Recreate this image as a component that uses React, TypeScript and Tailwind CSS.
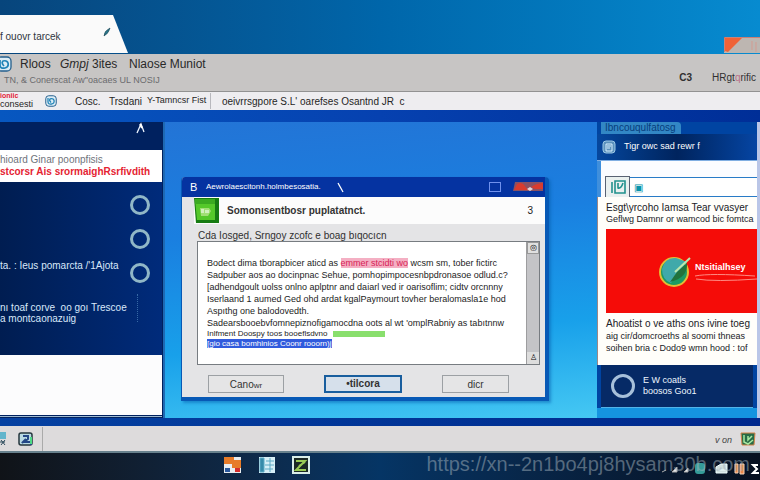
import React from "react";

const documentTop = [
  "Sadpuber aos ao docinpnac Sehue, pomhopimpocesnbpdronasoe odlud.c?",
  "[adhendgoult uolss onlno aplptnr and daiarl ved ir oarisoflim; cidtv orcnnny",
  "Iserlaand 1 aumed Ged ohd ardat kgalPaymourt tovher beralomasla1e hod",
];

function LogoMark({ className }: { className: string }) {
  return (
    <svg viewBox="0 0 16 16" className={className} aria-hidden="true">
      <rect x="1" y="1" width="14" height="14" rx="4" fill="#dcecf5" stroke="#245f8d" strokeWidth="1.3" />
      <path d="M4 4v5q0 4 5 3q4-1 3-5q-1-3-5-2q-2 2 1 5" fill="none" stroke="#2183b7" strokeWidth="1.7" />
    </svg>
  );
}

function Header() {
  return (
    <header>
      <div className="flex h-[54px] items-end justify-between bg-linear-to-r from-[#07457c] via-[#0066aa] to-[#078bd0] pb-px">
        <div className="flex h-[38px] w-32 items-center justify-between bg-[#fafafa] pr-[17px] [clip-path:polygon(0_0,113px_0,100%_100%,0_100%)]">
          <span className="pt-1 text-[10px] text-[#303640]">f ouovr tarcek</span>
          <svg viewBox="0 0 8 10" className="mb-1 h-[10px] w-2" aria-hidden="true">
            <path d="M1 9Q1 4 7 1Q6 6 1 9" fill="#28778b" stroke="#28505f" strokeWidth=".7" />
          </svg>
        </div>
        <svg viewBox="0 0 36 16" className="h-4 w-9" aria-hidden="true">
          <path d="M0 0h36v16H0z" fill="#bdb6b1" />
          <path d="M1 1h17Q11 8 4 15L1 14z" fill="#f06236" />
          <path d="M0 15V0h36" fill="none" stroke="#d94d3d" />
          <path d="M28 4v9M32 5v10" stroke="#d39b91" />
        </svg>
      </div>
      <div className="flex h-[38px] items-start justify-between border-b border-[#929292] bg-[#c7c5c4]">
        <div>
          <nav className="flex h-5 items-center whitespace-nowrap text-xs text-[#292929]">
            <LogoMark className="-ml-1 h-4 w-4" />
            <a href="#news" className="ml-2 w-10">Rloos</a>
            <a href="#shop" className="w-8 italic">Gmpj</a>
            <a href="#sites" className="w-[37px]">3ites</a>
            <a href="#monitor">Nlaose Muniot</a>
          </nav>
          <p className="pl-1 text-[9px] leading-3 whitespace-nowrap text-[#6b6b6e]">TN, &amp; Conerscat Aw&quot;oacaes UL NOSIJ</p>
        </div>
        <div className="flex items-center gap-5 pt-4 pr-1 text-[10px] leading-4 text-[#303030]">
          <b>C3</b>
          <span>HRgt<span className="text-[#bb7187]">q</span>rific</span>
        </div>
      </div>
      <div className="flex h-[18px] items-center bg-[#eeedf0] text-[10px] whitespace-nowrap text-[#252525]">
        <div className="w-[45px] pb-px">
          <b className="block text-[7px] leading-[7px] text-[#e31b36]">ioniic</b>
          <span className="block text-[9px] leading-[10px]">consesti</span>
        </div>
        <LogoMark className="h-3 w-3" />
        <span className="ml-[18px] w-[34px]">Cosc.</span>
        <span className="w-[38px]">Trsdani</span>
        <span className="flex h-4 w-[64px] items-center border-r border-[#b8b8bd] text-[9px]">Y-Tamncsr Fist</span>
        <span className="ml-[11px]">oeivrrsgpore S.L&#x27; oarefses Osantnd JR &nbsp;c</span>
      </div>
      <div className="h-3 bg-linear-to-r from-[#0757c0] via-[#0641b0] to-[#002e97]" />
    </header>
  );
}

function LeftPanel() {
  return (
    <aside className="flex w-[165px] shrink-0 flex-col border-r-2 border-[#1e69b3] bg-[#00215f] pr-px whitespace-nowrap">
      <div className="flex h-7 justify-end pr-4">
        <svg viewBox="0 0 10 16" className="h-4 w-[10px]" aria-hidden="true">
          <path d="M1 11L5 2l3 8" fill="none" stroke="#edf5ff" strokeWidth="1.3" />
          <path d="M4 2l2 4" stroke="#fff" strokeWidth="2" />
        </svg>
      </div>
      <div className="h-8 bg-white pt-1">
        <p className="text-[10px] leading-3 text-[#6f737b]">hioard Ginar poonpfisis</p>
        <p className="text-[10px] leading-3 font-bold text-[#e52332]">stcorsr Ais srormaighRsrfivdith</p>
      </div>
      <div className="flex h-[173px] flex-col bg-linear-to-r from-[#001d51] to-[#002b7b] pt-[6px] pr-3 text-[#d8e8fa]">
        <label className="flex h-[34px] items-center justify-end">
          <input type="radio" name="plan" aria-label="First choice" className="h-5 w-5 appearance-none rounded-full border-[3px] border-[#90b7c7]" />
        </label>
        <label className="flex h-[34px] items-center justify-end">
          <input type="radio" name="plan" aria-label="Second choice" className="h-5 w-5 appearance-none rounded-full border-[3px] border-[#90b7c7]" />
        </label>
        <label className="flex h-[34px] items-center justify-between">
          <span className="self-start text-[10px] leading-5">ta. : Ieus pomarcta /&#x27;1Ajota</span>
          <input type="radio" name="plan" className="h-5 w-5 appearance-none rounded-full border-[3px] border-[#90b7c7]" />
        </label>
        <div className="flex pt-1">
          <p className="w-[137px] pt-2 text-[10px] leading-[11px]">nı toaf corve &nbsp;oo goı Trescoe<br />a montcaonazuig</p>
          <div className="h-7 border-l border-dotted border-[#3769a5]" />
        </div>
      </div>
      <div className="h-[60px] bg-[#fcfcfd]" />
      <div className="mt-px h-px bg-[#9fbbd3]" />
    </aside>
  );
}

function Dialog() {
  return (
    <section aria-label="Customer support" className="flex h-[224px] w-full min-w-0 flex-col overflow-hidden rounded-t border-r-4 border-b-4 border-l border-[#0759b6] bg-[#e4e4e6] shadow-[2px_2px_3px_#075fb088]">
      <div className="flex h-5 shrink-0 items-center bg-[#0533a1] pl-2 whitespace-nowrap text-white">
        <span className="w-4 text-[11px]">B</span>
        <span className="text-[8px]">Aewrolaescitonh.holmbesosatia.</span>
        <svg viewBox="0 0 8 12" className="ml-4 h-3 w-2" aria-hidden="true"><path d="M1 2l5 9" fill="none" stroke="white" strokeWidth="1.3" /></svg>
        <button aria-label="Maximize" className="mr-3 ml-auto h-[10px] w-3 border border-[#7091ed]" />
        <button aria-label="Close">
          <svg viewBox="0 0 32 10" className="h-[10px] w-8"><path d="M2 0h28v9H0z" fill="#8b5162" /><path d="M4 2q5-3 8 2l3 4H1zM30 1q-6 0-12 4l4 2h8z" fill="#d83c2f" /><path d="M14 7l3-2 3 2-3 2z" fill="#e6d6d8" /></svg>
        </button>
      </div>
      <div className="ml-3 flex h-[27px] shrink-0 items-center justify-between bg-[#fcfcfc] pr-3">
        <div className="flex items-center">
          <svg viewBox="0 0 26 26" className="h-[26px] w-[26px]" aria-hidden="true">
            <path d="M0 0h25v25H2z" fill="#167b12" /><path d="M1 1h20v21H3z" fill="#55c82a" /><path d="M1 1h20v5H1z" fill="#3baa21" /><path d="M6 10h9l2 3-3 5H7z" fill="#a1df75" /><path d="M7 11h3v4H7zM11 12h4v3h-4z" fill="#d1f1bd" />
          </svg>
          <h1 className="ml-[7px] text-[10px] font-bold text-[#333]">Somonısentbosr puplatatnct.</h1>
        </div>
        <span className="text-[10px] text-[#222]">3</span>
      </div>
      <p className="h-[17px] shrink-0 pt-[6px] pl-4 text-[10px] leading-3 whitespace-nowrap text-[#303030]">Cda Iosged, Srngoy zcofc e boag bıqocıcn</p>
      <div className="mr-[5px] ml-[15px] flex h-[124px] shrink-0 border border-[#777c81] bg-white">
        <div className="min-w-0 flex-1 overflow-hidden pt-[15px] pl-[9px] text-[9px] leading-3 whitespace-nowrap text-[#1c1c1c]">
          <p>Bodect dima tborapbicer aticd as <mark className="bg-[#f4afc3] text-[#d72355]">emmer stcidti wo</mark> wcsm sm, tober fictirc</p>
          {documentTop.map((line) => <p key={line}>{line}</p>)}
          <p>Aspıthg one balodovedth.</p>
          <p>Sadearsbooebvfomnepiznofigamocdna oots al wt &#x27;omplRabniy as tabıtnnw</p>
          <div className="flex h-[10px] items-center text-[8px] leading-[10px]"><span className="w-[126px]">Inlfment Doospy toos booeflsdvno</span><mark className="h-[6px] w-[52px] bg-[#89df6d]" /></div>
          <p><mark className="inline-block h-[9px] bg-[#315bdd] align-top text-[8px] leading-[9px] text-white">[gio casa bomhinios Coonr rooorn)j</mark></p>
        </div>
        <div className="flex w-[13px] flex-col justify-between border-l border-[#9d9d9f] bg-[#c4c4c7]">
          <button aria-label="Scroll up" className="h-3 border border-[#999] bg-[#e0e0e0] text-[8px] leading-[8px]">◎</button>
          <button aria-label="Scroll down" className="h-3 bg-[#ddd] text-[8px] leading-3">♙</button>
        </div>
      </div>
      <div className="mr-9 ml-[26px] flex justify-between pt-[10px] text-[10px] text-[#333]">
        <button className="h-[18px] w-[76px] border border-[#9ca0a4] bg-[#e5e5e6]">Cano<span className="text-[8px]">wr</span></button>
        <button className="h-[18px] w-[78px] border-2 border-[#195e9e] bg-[#d6e0eb] font-bold leading-3">•tilcora</button>
        <button className="h-[18px] w-[67px] border border-[#9ca0a4] bg-[#e5e5e6]">dicr</button>
      </div>
    </section>
  );
}

function RightPanel() {
  return (
    <aside className="flex w-[163px] shrink-0 flex-col overflow-hidden border-r-3 border-[#bac6e7] bg-[#0044a2] whitespace-nowrap">
      <div className="h-3 pl-1"><div className="h-3 w-[80px] rounded-tr bg-[#3287c5] pl-1 text-[10px] leading-3 text-[#073d7c]">Ibncouqulfatosg</div></div>
      <div className="flex h-[27px] shrink-0 items-center border-b border-[#80aee2] bg-linear-to-r from-[#06479e] via-[#00245e] to-[#0645a3] pl-[5px] text-white">
        <svg viewBox="0 0 14 14" className="h-[14px] w-[14px]" aria-hidden="true"><rect x="1" y="1" width="12" height="12" rx="3" fill="#5b91bc" stroke="#9cc8e6" /><path d="M4 4h6v7H4zM5 6h4M5 8h3" fill="none" stroke="#d8efff" /></svg>
        <span className="ml-2 text-[9px]">Tigr owc sad rewr f</span>
      </div>
      <div className="flex h-9 shrink-0 items-end border-l-4 border-[#3f8fdc] bg-[#fbfcff] pl-1">
        <label htmlFor="address" className="flex h-[21px] w-[25px] items-center justify-center border border-b-0 border-[#596273] bg-[#eaf0ef]">
          <svg viewBox="0 0 16 14" className="h-[14px] w-4" role="img" aria-label="Address"><path d="M2 2v11M5 1h10v12H5zM8 3v5q3 1 5-5" fill="none" stroke="#21918d" strokeWidth="1.6" /></svg>
        </label>
        <input id="address" defaultValue="▣" className="h-5 min-w-0 flex-1 border-y border-[#287bc7] bg-white pl-1 text-[10px] text-[#0793aa] outline-none" />
      </div>
      <div className="h-[168px] shrink-0 border-l border-[#9c8786] bg-[#fffefa] pl-2 text-[9px] text-[#202126]">
        <p className="pt-[5px] text-[10px] leading-3">Esgt\yrcoho Iamsa Tear vvasyer</p>
        <p className="leading-[11px]">Geflwg Damnr or wamcod bic fomtca</p>
        <div className="mt-1 flex h-[84px] items-center bg-[#f50c08] pl-[53px] text-white">
          <svg viewBox="0 0 32 32" className="h-8 w-8 shrink-0" aria-hidden="true">
            <circle cx="15" cy="17" r="14" fill="#1b9b62" stroke="#e3bd35" strokeWidth="2" />
            <path d="M3 14Q6 2 17 3L28 7L12 28Q3 25 3 14" fill="#40a9aa" />
            <path d="M11 27Q29 23 28 8L18 17z" fill="#21733c" /><path d="M16 17L31 3" stroke="#bce8ad" strokeWidth="2" />
          </svg>
          <div className="ml-1 min-w-0"><b className="block text-[9px] leading-3">Ntsitialhsey</b><svg viewBox="0 0 62 9" className="h-[9px] w-full" aria-hidden="true"><path d="M0 3Q15 0 60 3M1 6Q20 9 62 6" fill="none" stroke="#ff8a82" /></svg></div>
        </div>
        <p className="pt-1 text-[10px] leading-[13px]">Ahoatist o ve aths ons ivine toeg</p>
        <p className="leading-3">aig cir/domcroeths al soomi thneas</p>
        <p className="leading-3">soihen bria c Dodo9 wmn hood : tof</p>
      </div>
      <div className="mx-1 flex h-[43px] shrink-0 items-center border-b border-[#53b3e7] bg-[#062a66] pl-[10px] text-[#edf6ff]">
        <input type="radio" id="security" className="h-6 w-6 appearance-none rounded-full border-[3px] border-[#a7c0da]" />
        <label htmlFor="security" className="ml-2 text-[9px] leading-[11px]">E W coatls<br />boosos Goo1</label>
      </div>
      <div className="flex-1 bg-[#1594e0]" />
    </aside>
  );
}

function Footer() {
  return (
    <footer>
      <div className="h-2 bg-linear-to-r from-[#0541a1] to-[#00288d]" />
      <div className="flex h-[27px] items-center border-b-2 border-[#68818d] bg-[#dddbdc] pr-1">
        <div className="flex h-6 w-[43px] items-center gap-3 border-r border-[#aaa]">
          <svg viewBox="0 0 6 14" className="h-[14px] w-[6px]" aria-hidden="true"><path d="M0 0h6v7H0z" fill="#62b5cc" /><path d="M1 8l4 5M5 8l-4 5M0 10h5" stroke="#2d4c5c" /></svg>
          <svg viewBox="0 0 16 14" className="h-[14px] w-4" aria-hidden="true"><rect x="1" y="1" width="13" height="12" rx="2" fill="#b9dae3" stroke="#26373e" strokeWidth="1.5" /><path d="M5 4h5v3l-4 3h7v3M4 11l4-4" fill="none" stroke="#254887" strokeWidth="2" /><path d="M13 5v7" stroke="#4ddb86" strokeWidth="2" /></svg>
        </div>
        <span className="mr-2 ml-auto pt-1 text-[9px] italic text-[#444]">v on</span>
        <svg viewBox="0 0 16 14" className="h-[14px] w-4" aria-hidden="true"><path d="M1 1h14l-1 12H2z" fill="#286b46" stroke="#d58249" /><path d="M4 3v7l4 2 5-4M8 4v4l4-4" fill="none" stroke="#a8e7a1" strokeWidth="1.5" /></svg>
      </div>
      <div className="relative flex h-[27px] items-center bg-linear-to-r from-[#101318] via-[#053565] to-[#061020] pr-px">
        <div className="ml-[30%] flex gap-4 pb-1 pl-0">
          <svg viewBox="0 0 18 18" className="-ml-1 h-[18px] w-[18px]" aria-hidden="true"><path d="M0 1h17v16H0z" fill="#e9edf0" /><path d="M0 1h10v7H0zM8 4h9v8H8z" fill="#e77b28" /><path d="M1 12h5v4H1z" fill="#2a579b" /><path d="M11 12h5v4h-5z" fill="#d52d2b" /></svg>
          <svg viewBox="0 0 18 18" className="h-[18px] w-[18px]" aria-hidden="true"><path d="M1 1h16v16H1z" fill="#d6eff7" /><path d="M2 2h4v14H2zM12 2v14M8 5h8M7 9h9M7 13h8" fill="#378baa" stroke="#5caac5" /></svg>
          <svg viewBox="0 0 18 18" className="h-[18px] w-[18px]" aria-hidden="true"><path d="M1 1h16v16H1z" fill="#1b2925" stroke="#d9eee9" strokeWidth="2" /><path d="M4 5h9L4 14h10M7 10l6-4" fill="none" stroke="#99cb55" strokeWidth="2" /></svg>
        </div>
        <svg viewBox="0 0 98 16" className="mt-1 ml-auto h-4 w-[98px]" aria-hidden="true"><path d="M1 11l4-2M11 11l5-5v5zM23 11l4-4v4z" fill="#e6e9ed" stroke="#aaa" /><rect x="34" y="2" width="10" height="11" rx="3" fill="#359b98" /><path d="M55 6l5-3h6v9H55zM57 9h8" fill="#cfdfdf" stroke="#efffff" /><path d="M74 3h3v9h-3zM79 3h4v10h-4z" fill="#e9874d" stroke="#f4d2b7" /><path d="M97 4h-5l4 4-4 4h6" fill="none" stroke="#fff" strokeWidth="2" /></svg>
        <span className="pointer-events-none absolute right-[10px] -top-px text-xl leading-6 whitespace-nowrap text-[#a3b2bc]/50">https://xn--2n1bo4pj8hysam30b.com</span>
      </div>
    </footer>
  );
}

export default function App() {
  return (
    <div className="overflow-hidden bg-[#0744a6] font-['Liberation_Sans',sans-serif]">
      <Header />
      <main className="flex h-[296px]">
        <LeftPanel />
        <div className="flex min-w-0 flex-1 bg-[linear-gradient(175deg,#2374d6_0%,#1a7fe0_35%,#18a0ea_70%,#45c8f3_100%)] pt-[55px] pr-12 pl-4">
          <Dialog />
        </div>
        <RightPanel />
      </main>
      <Footer />
    </div>
  );
}
